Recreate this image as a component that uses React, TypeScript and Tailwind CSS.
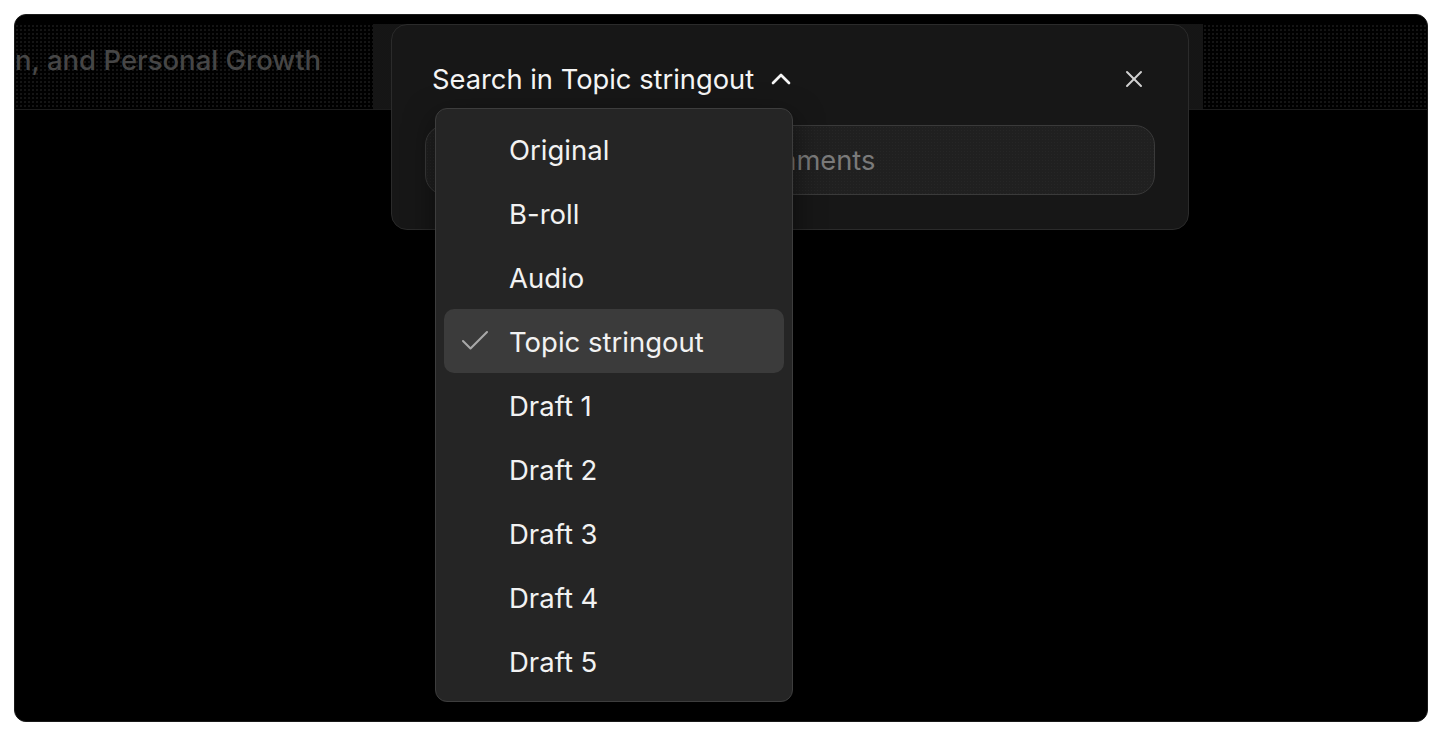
import { Check, ChevronUp, X } from "lucide-react";

const OPTIONS = [
  "Original",
  "B-roll",
  "Audio",
  "Topic stringout",
  "Draft 1",
  "Draft 2",
  "Draft 3",
  "Draft 4",
  "Draft 5",
];

const SELECTED = "Topic stringout";

function SourceMenu() {
  return (
    <div className="absolute left-[420px] top-[93px] w-[358px] rounded-[12px] border border-[#3d3d3d] bg-[#252525] p-[8px] shadow-[0_10px_30px_rgba(0,0,0,0.5)]">
      {OPTIONS.map((opt) => {
        const active = opt === SELECTED;
        return (
          <div
            key={opt}
            className={`relative flex h-[64px] items-center rounded-[10px] pl-[65px] pt-[3px] text-[27.5px] text-[#f2f2f2] ${
              active ? "bg-[#3b3b3b]" : ""
            }`}
          >
            {active && (
              <Check
                size={36}
                strokeWidth={1.4}
                className="absolute left-[13px] top-[14px] text-[#a8a8a8]"
              />
            )}
            {opt}
          </div>
        );
      })}
    </div>
  );
}

function SearchPanel() {
  return (
    <div className="absolute left-[376px] top-[9px] h-[206px] w-[798px] rounded-[16px] border border-[#2b2b2b] bg-[#171717] px-[33px]">
      <div className="flex h-[100px] items-center justify-between pl-[7px] pr-[7px] pt-[10px]">
        <div className="flex items-center gap-[11px] text-[27.3px] text-[#f5f5f5]">
          <span>Search in Topic stringout</span>
          <ChevronUp size={32} strokeWidth={2} className="-mt-[2px]" />
        </div>
        <X size={28} strokeWidth={1.7} className="-mt-[2px] text-[#d0d0d0]" />
      </div>
      <div className="flex h-[70px] items-center rounded-[20px] border border-[#3a3a3a] bg-[#202020] bg-[radial-gradient(circle,#262626_0.6px,transparent_0.8px)] bg-[length:3px_3px] pl-[15px] pt-[3px] text-[27.3px] text-[#7a7a7a]">
        Search transcripts and comments
      </div>
    </div>
  );
}

export default function App() {
  return (
    <div
      className="h-[736px] w-[1442px] bg-white p-[14px]"
      style={{ fontFamily: "Inter, 'Noto Sans', sans-serif" }}
    >
      <div className="relative h-[708px] w-full overflow-hidden rounded-[12px] border border-[#1a1a1a] bg-black">
        <div className="mt-[9px] flex h-[86px] border-b border-[#1c1c1c]">
          <div className="flex w-[358px] items-center overflow-hidden bg-[radial-gradient(circle,#161616_0.7px,transparent_0.8px)] bg-[length:4px_4px] pb-[12px]">
            <span className="whitespace-nowrap text-[27.5px] font-medium text-[#464646]">
              n, and Personal Growth
            </span>
          </div>
          <div className="w-[830px] bg-[#111111] bg-[radial-gradient(circle,#1b1b1b_0.6px,transparent_0.8px)] bg-[length:2px_2px]" />
          <div className="flex-1 bg-[radial-gradient(circle,#161616_0.7px,transparent_0.8px)] bg-[length:4px_4px]" />
        </div>
        <SearchPanel />
        <SourceMenu />
      </div>
    </div>
  );
}
